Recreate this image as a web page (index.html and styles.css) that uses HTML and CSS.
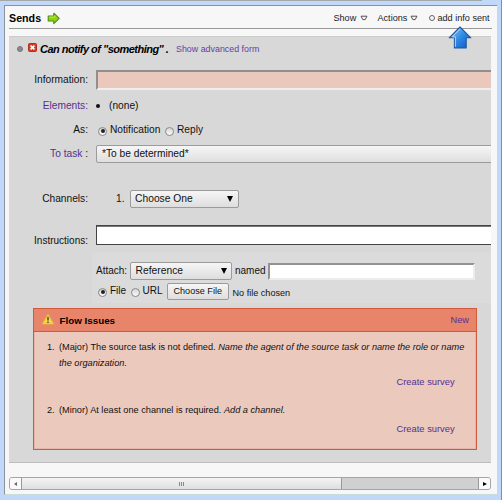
FILE: index.html
```html
<!DOCTYPE html>
<html lang="en">
<head>
<meta charset="utf-8">
<title>Sends</title>
<link rel="stylesheet" href="styles.css">
</head>
<body>
<div class="topline"></div>
<main class="panel">
  <header class="header">
    <h1>Sends</h1>
    <svg class="go" width="14" height="13" viewBox="0 0 14 13"><path d="M1.200 4h5.600V1.200l5.400 5.100-5.400 5.300V9H1.200z" fill="#91d40c" stroke="#4e8d12" stroke-width="1.100" stroke-linejoin="round"/><path d="M2.200 5.100h5.600V3.400" fill="none" stroke="#c9f06a" stroke-width=".8"/></svg>
    <nav class="menu">
      <span class="show">Show</span>
      <svg class="tri" width="8" height="6" viewBox="0 0 8 6"><path d="M1 1.200h6L5.200 4.600H2.800z" fill="#f2f2f2" stroke="#555" stroke-linejoin="round"/></svg>
      <span class="actions">Actions</span>
      <svg class="tri t2" width="8" height="6" viewBox="0 0 8 6"><path d="M1 1.200h6L5.200 4.600H2.800z" fill="#f2f2f2" stroke="#555" stroke-linejoin="round"/></svg>
      <i class="ring"></i>
      <span class="add">add info sent</span>
    </nav>
    <svg class="pointer" width="24" height="24" viewBox="0 0 24 24"><defs><linearGradient id="b" x1="0" y1="0" x2="1" y2="1"><stop offset="0" stop-color="#8fd0ff"/><stop offset=".5" stop-color="#2f8be6"/><stop offset="1" stop-color="#0c55c4"/></linearGradient></defs><path d="M12 1l10.800 10.800h-4.600v10.200H6.400v-10.200H1.200z" fill="url(#b)" stroke="#1f569f" stroke-width="1.100" stroke-linejoin="round"/><path d="M12 2.800L4.200 10.800h3.200v10" fill="none" stroke="#b5e0ff" stroke-width=".9"/></svg>
  </header>
  <section class="form">
    <div class="title">
      <i class="dot"></i>
      <svg class="close" width="9" height="9" viewBox="0 0 9 9"><rect x=".5" y=".5" width="8" height="8" rx="1" fill="#dc3b22" stroke="#b72c18"/><path d="M2.600 2.600l3.800 3.800M6.400 2.600L2.600 6.400" stroke="#fff" stroke-width="1.600"/></svg>
      <h2>Can notify of "something" .</h2>
      <a class="adv">Show advanced form</a>
    </div>
    <div class="row info"><label>Information:</label><div class="field pink"></div></div>
    <div class="row elements"><label class="link">Elements:</label><i class="bullet"></i><span>(none)</span></div>
    <div class="row as"><label>As:</label><i class="radio on"></i><span class="w1">Notification</span><i class="radio"></i><span>Reply</span></div>
    <div class="row task"><label><a class="link">To task</a> :</label><div class="select wide">*To be determined*</div></div>
    <div class="row channels"><label>Channels:</label><span class="num">1.</span><div class="select chan">Choose One<b></b></div></div>
    <div class="row instr"><label>Instructions:</label><div class="field area"></div></div>
    <div class="attach">
      <div class="line"><span class="alabel">Attach:</span><div class="select ref">Reference<b></b></div><span class="named">named</span><div class="field name"></div></div>
      <div class="line second"><i class="radio on"></i><span class="file">File</span><i class="radio"></i><span class="url">URL</span><div class="button">Choose File</div><span class="nofile">No file chosen</span></div>
    </div>
    <div class="issues">
      <div class="ihead">
        <svg width="14" height="12" viewBox="0 0 14 12"><path d="M7 .9l5.900 10.200H1.100z" fill="#fbd34b" stroke="#e3b23a" stroke-linejoin="round"/><path d="M7 3.700v3.800M7 8.500v1.400" stroke="#444" stroke-width="1.400"/></svg>
        <h3>Flow Issues</h3><a class="link">New</a>
      </div>
      <ol>
        <li><span class="n">1.</span><p>(Major) The source task is not defined. <em>Name the agent of the source task or name the role or name<br>the organization.</em></p></li>
        <li class="survey s1"><a class="link">Create survey</a></li>
        <li class="second-issue"><span class="n">2.</span><p>(Minor) At least one channel is required. <em>Add a channel.</em></p></li>
        <li class="survey s2"><a class="link">Create survey</a></li>
      </ol>
    </div>
  </section>
  <div class="scroll">
    <div class="arrow left"><i></i></div>
    <div class="thumb"><i></i><i></i><i></i></div>
    <div class="arrow right"><i></i></div>
  </div>
</main>
</body>
</html>
```
FILE: styles.css
```css
* { box-sizing: border-box; }
body {
  margin: 0; width: 502px; height: 500px; overflow: hidden;
  background: #c1d8fb; border-right: 1px solid #83909f;
  font: 10.2px/14px "Liberation Sans", Arial, sans-serif; color: #111;
}
h1, h2, h3, p, ol { margin: 0; padding: 0; }
i { font-style: normal; flex: none; }
svg { flex: none; display: block; }
.topline { width: 482px; height: 1px; background: #a3a8ab; }
.panel {
  width: 493px; height: 490px; margin: 4px 0 0 4px; padding: 0 6px 0 4px;
  background: #f7f7f7; border: 1px solid #8c929a; border-right: 0; border-bottom-color: #c9dcdc;
}
.header {
  position: relative; display: flex; align-items: center;
  width: 483px; height: 23px; border-bottom: 1px solid #999; padding-top: 2px;
}
h1 { font-size: 10.700px; width: 38px; color: #000; }
.menu { margin-left: auto; display: flex; align-items: center; height: 20px; padding-right: 2px; font-size: 9.100px; white-space: nowrap; color: #222; }
.show { width: 26.500px; }
.actions { width: 32px; margin-left: 9.500px; }
.tri { margin-top: -1px; }
.ring { width: 6px; height: 6px; border: 1px solid #666; border-radius: 3px; margin-left: 11px; }
.add { width: 52.500px; margin-left: 3px; }
.pointer { position: absolute; left: 439px; top: 20px; z-index: 2; }
.form { width: 482px; height: 427px; margin-top: 7px; background: #d8d8d8; border-top: 1px solid #cbcbcb; border-bottom: 1px solid #bdbdbd; overflow: hidden; }
.title { display: flex; align-items: center; height: 23px; padding-left: 8px; }
.dot { width: 6px; height: 6px; border-radius: 3px; background: #8b8b8b; border: 1px solid #757575; }
.close { margin: -2px 0 0 5px; }
h2 { width: 136px; margin-left: 3px; font-size: 11px; font-style: italic; letter-spacing: -.52px; white-space: nowrap; color: #000; }
.adv { font-size: 8.900px; white-space: nowrap; color: #6142a3; padding-top: 1px; }
.link { color: #553091; }
.row { display: flex; align-items: center; height: 20px; margin-top: 4px; white-space: nowrap; }
.row label { flex: none; width: 79px; margin-right: 8px; text-align: right; }
.row.info { height: 24px; margin-top: 8px; }
.field { border: 1px solid #999; background: #fff; flex: none; }
.field.pink { width: 395px; height: 20px; border-width: 2px 0 2px 2px; border-color: #8f8f8f #eee #eee #8f8f8f; background: #ebc8bc; }
.bullet { width: 4px; height: 4px; border-radius: 2px; background: #111; margin: 0 9px 0 0; }
.radio { width: 9px; height: 9px; border: 1px solid #888; border-radius: 50%; background: linear-gradient(#d5d5d5, #fafafa); display: flex; align-items: center; justify-content: center; margin-top: 2px; }
.radio.on::after { content: ""; width: 4px; height: 4px; border-radius: 2px; background: #222; }
.as .radio.on, .second .radio.on { margin-left: 2px; }
.as span, .file, .url { margin-left: 3px; }
.w1 { width: 52px; margin-right: 3px; }
.select, .button { display: flex; align-items: center; flex: none; height: 18px; border: 1px solid #9b9b9b; border-radius: 2px; background: linear-gradient(#f6f6f6, #dedede); padding-left: 4.500px; }
.select b { margin-left: auto; margin-right: 4.500px; border: 3px solid transparent; border-top: 6px solid #000; border-bottom: 0; }
.select.wide { width: 399px; padding-left: 5px; }
.row.channels { height: 21px; margin-top: 24px; }
.num { width: 13.500px; margin-left: 20px; }
.chan { width: 109px; font-size: 10.300px; }
.row.instr { margin-top: 16px; align-items: flex-start; }
.instr label { padding-top: 9px; font-size: 10px; }
.area { width: 399px; height: 20px; border: 1px solid #444; box-shadow: inset 0 1px #777; }
.attach { width: 399px; height: 51px; margin: 7px 0 0 83px; padding: 10px 0 0 4px; background: #dbdbdb; font-size: 10px; }
.line { display: flex; align-items: center; height: 18px; white-space: nowrap; }
.line.second { margin-top: 2px; }
.alabel { width: 34px; }
.ref { width: 102px; font-size: 10.300px; }
.named { width: 33px; margin-left: 3px; }
.name { width: 207px; height: 17px; border-width: 2px; border-color: #929292 #ececec #ececec #929292; }
.file { width: 17px; margin-right: 3.500px; }
.url { width: 21px; }
.button { width: 62px; height: 17px; padding-left: 6px; margin-left: 3px; font-size: 9.100px; }
.nofile { font-size: 9.100px; margin: 4px 0 0 4px; }
.issues { width: 444px; height: 142px; margin: 5px 0 0 24px; border: 1px solid #d2593c; background: #ebc9bd; box-shadow: inset 0 0 0 1px #e6b6a5; font-size: 9.200px; }
.ihead { display: flex; align-items: center; height: 23px; background: #e8846a; border-bottom: 1px solid #d2593c; padding: 0 7px; }
h3 { font-size: 9.800px; margin-left: 4.500px; padding-top: 2px; color: #000; }
.ihead svg { margin-top: -2px; }
.ihead .link { margin-left: auto; }
ol { list-style: none; padding: 8px 0 0 13px; }
li { display: flex; line-height: 15.500px; white-space: nowrap; }
.n { width: 12px; flex: none; }
.survey { margin-left: 349.500px; font-size: 9.350px; }
.s1 { margin-top: 4px; }
.second-issue { margin-top: 12.500px; }
.s2 { margin-top: 3px; }
.scroll { display: flex; width: 482px; height: 13px; margin-top: 14px; border: 1px solid #a5a5a5; border-radius: 3px; background: #d0d0d0; overflow: hidden; }
.arrow { width: 12px; background: #fafafa; display: flex; align-items: center; justify-content: center; border-right: 1px solid #999; }
.arrow i { border: 2.500px solid transparent; border-left: 0; border-right: 3.500px solid #666; }
.arrow.right { margin-left: auto; border-right: 0; border-left: 1px solid #999; }
.arrow.right i { border: 2.800px solid transparent; border-right: 0; border-left: 4px solid #000; }
.thumb { width: 320px; background: linear-gradient(#f4f4f4, #dedede); border-right: 1px solid #999; display: flex; align-items: center; justify-content: center; gap: 1px; }
.thumb i { width: 1px; height: 4px; background: #888; }
```
